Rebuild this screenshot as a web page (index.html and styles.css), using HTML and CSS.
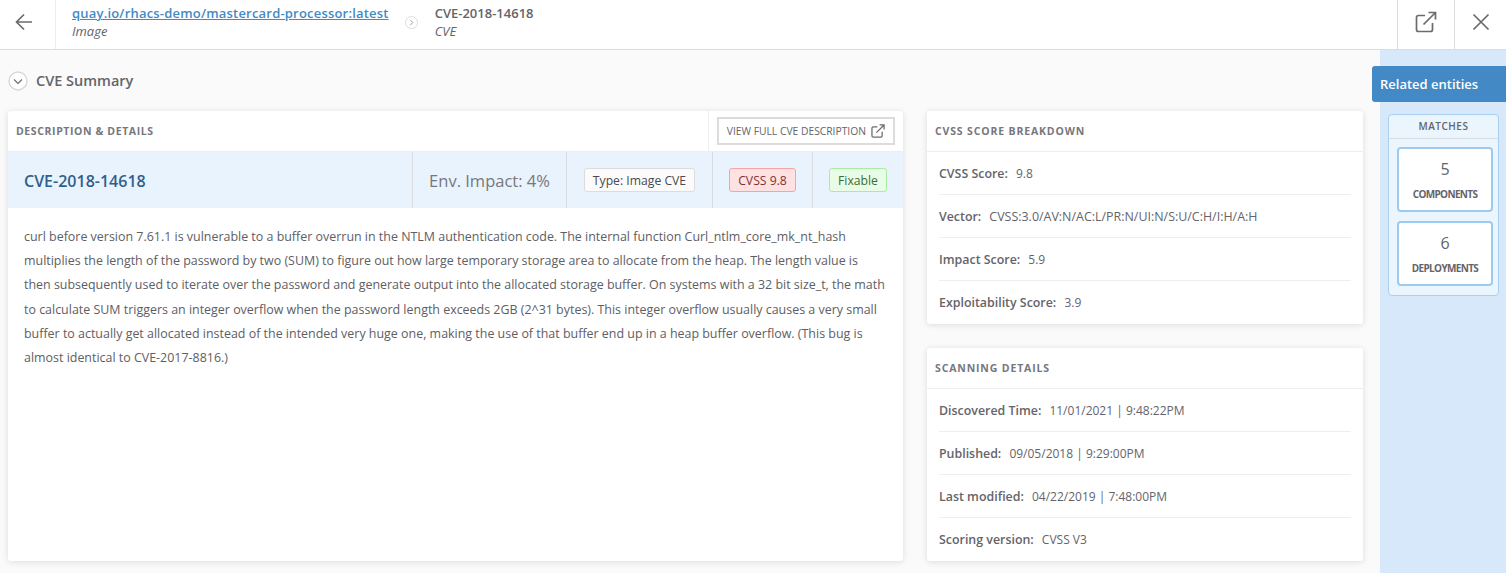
FILE: index.html
```html
<!DOCTYPE html>
<html lang="en">
<head>
    <meta charset="UTF-8">
    <meta name="viewport" content="width=device-width, initial-scale=1.0">
    <title>CVE-2018-14618</title>
    <link rel="stylesheet" href="styles.css">
</head>
<body>
    <header class="topbar">
        <button class="back-btn" aria-label="Back">
            <svg width="20" height="20" viewBox="0 0 20 20" fill="none" stroke="#6b6b6b" stroke-width="1.7"><path d="M18 10H2.500M10 2.500 2.500 10l7.500 7.500"/></svg>
        </button>
        <div class="crumbs">
            <div class="crumb">
                <a href="#" class="crumb-link">quay.io/rhacs-demo/mastercard-processor:latest</a>
                <em class="crumb-type">Image</em>
            </div>
            <span class="crumb-sep">
                <svg width="13" height="13" viewBox="0 0 13 13" fill="none"><circle cx="6.500" cy="6.500" r="6" stroke="#dcdcdc"/><path d="M5.200 3.800 7.800 6.500 5.200 9.200" stroke="#9a9a9a" stroke-width=".9"/></svg>
            </span>
            <div class="crumb">
                <span class="crumb-title">CVE-2018-14618</span>
                <em class="crumb-type">CVE</em>
            </div>
        </div>
        <button class="top-icon" aria-label="Open in new window">
            <svg width="22" height="22" viewBox="0 0 22 22" fill="none" stroke="#6b6b6b" stroke-width="1.7"><path d="M10 4.500H3.500a2 2 0 0 0-2 2V18.500a2 2 0 0 0 2 2h12a2 2 0 0 0 2-2V12M8.500 13.500 20.500 1.500M13.500 1.500h7v7"/></svg>
        </button>
        <button class="top-icon" aria-label="Close">
            <svg width="18" height="18" viewBox="0 0 18 18" fill="none" stroke="#6b6b6b" stroke-width="1.7"><path d="M1.500 1.500l15 15M16.500 1.500l-15 15"/></svg>
        </button>
    </header>

    <div class="page">
        <main class="content">
            <div class="summary-head">
                <svg width="20" height="20" viewBox="0 0 20 20" fill="none"><circle cx="10" cy="10" r="9" fill="#fff" stroke="#d8d8d8" stroke-width="1.400"/><path d="M6 8.500 10 12.500l4-4" stroke="#6b6b6b" stroke-width="1.100"/></svg>
                <h2>CVE Summary</h2>
            </div>
            <div class="columns">
                <section class="card details">
                    <div class="card-head">
                        <h3>Description &amp; Details</h3>
                        <div class="head-action">
                            <a href="#" class="full-link">View Full CVE Description
                                <svg width="14" height="14" viewBox="0 0 22 22" fill="none" stroke="#6b6b6b" stroke-width="2"><path d="M10 4.500H3.500a2 2 0 0 0-2 2V18.500a2 2 0 0 0 2 2h12a2 2 0 0 0 2-2V12M8.500 13.500 20.500 1.500M13.500 1.500h7v7"/></svg>
                            </a>
                        </div>
                    </div>
                    <div class="cve-band">
                        <div class="band-name">CVE-2018-14618</div>
                        <div class="band-cell band-impact">Env. Impact: 4%</div>
                        <div class="band-cell band-type"><span class="tag tag-plain">Type: Image CVE</span></div>
                        <div class="band-cell band-cvss"><span class="tag tag-red">CVSS 9.8</span></div>
                        <div class="band-cell band-fix"><span class="tag tag-green">Fixable</span></div>
                    </div>
                    <p class="description">curl before version 7.61.1 is vulnerable to a buffer overrun in the NTLM authentication code. The internal function Curl_ntlm_core_mk_nt_hash multiplies the length of the password by two (SUM) to figure out how large temporary storage area to allocate from the heap. The length value is then subsequently used to iterate over the password and generate output into the allocated storage buffer. On systems with a 32 bit size_t, the math to calculate SUM triggers an integer overflow when the password length exceeds 2GB (2^31 bytes). This integer overflow usually causes a very small buffer to actually get allocated instead of the intended very huge one, making the use of that buffer end up in a heap buffer overflow. (This bug is almost identical to CVE-2017-8816.)</p>
                </section>

                <div class="side-cards">
                    <section class="card info">
                        <div class="card-head"><h3>CVSS Score Breakdown</h3></div>
                        <ul class="rows">
                            <li><b>CVSS Score:</b> 9.8</li>
                            <li><b>Vector:</b> <span class="vector">CVSS:3.0/AV:N/AC:L/PR:N/UI:N/S:U/C:H/I:H/A:H</span></li>
                            <li><b>Impact Score:</b> 5.9</li>
                            <li><b>Exploitability Score:</b> 3.9</li>
                        </ul>
                    </section>
                    <section class="card info">
                        <div class="card-head"><h3>Scanning Details</h3></div>
                        <ul class="rows">
                            <li><b>Discovered Time:</b> 11/01/2021 | 9:48:22PM</li>
                            <li><b>Published:</b> 09/05/2018 | 9:29:00PM</li>
                            <li><b>Last modified:</b> 04/22/2019 | 7:48:00PM</li>
                            <li><b>Scoring version:</b> CVSS V3</li>
                        </ul>
                    </section>
                </div>
            </div>
        </main>

        <aside class="related">
            <div class="related-tab">Related entities</div>
            <div class="matches">
                <div class="matches-title">Matches</div>
                <div class="matches-list">
                    <a href="#" class="match"><span class="match-num">5</span><span class="match-label">Components</span></a>
                    <a href="#" class="match"><span class="match-num">6</span><span class="match-label">Deployments</span></a>
                </div>
            </div>
        </aside>
    </div>
</body>
</html>
```

FILE: styles.css
```css
* {
    box-sizing: border-box;
}

html, body {
    height: 100%;
}

body {
    font-family: "Open Sans", sans-serif;
    font-size: 12px;
    margin: 0;
    color: #64646a;
    background-color: #fafafa;
    overflow: hidden;
}

button {
    background: none;
    border: 0;
    padding: 0;
}

/* top bar */
.topbar {
    display: flex;
    height: 50px;
    background-color: #fff;
    border-bottom: 1px solid #dcdcdc;
}

.back-btn {
    width: 56px;
    border-right: 1px solid #eee;
    display: flex;
    align-items: center;
    justify-content: center;
    padding: 0 8px 5px 0;
}

.crumbs {
    flex: 1;
    display: flex;
    align-items: center;
    padding-left: 16px;
}

.crumb {
    display: flex;
    flex-direction: column;
    line-height: 18px;
    margin-top: -5px;
}

.crumb-link {
    color: #3f8ac8;
    font-size: 13px;
    font-weight: 600;
    letter-spacing: 0.2px;
}

.crumb-title {
    font-size: 13px;
    font-weight: 600;
    color: #64646a;
}

.crumb-type {
    color: #64646a;
    font-size: 13px;
}

.crumb-sep {
    display: flex;
    margin: 0 17px 5px 16px;
}

.top-icon {
    width: 57px;
    border-left: 1px solid #dcdcdc;
    display: flex;
    align-items: center;
    justify-content: center;
    padding-bottom: 5px;
}

.top-icon + .top-icon {
    width: 52px;
}

/* main layout */
.page {
    display: flex;
    height: 523px;
}

.content {
    flex: 1;
    padding: 0 17px 0 8px;
}

.summary-head {
    display: flex;
    align-items: center;
    gap: 8px;
    height: 61px;
}

.summary-head h2 {
    margin: 0;
    font-size: 14.500px;
    font-weight: 600;
    color: #64646a;
}

.columns {
    display: flex;
    gap: 24px;
}

.card {
    background-color: #fff;
    border-radius: 3px;
    box-shadow: 0 1px 6px rgba(0, 0, 0, 0.12);
}

.details {
    width: 895px;
    height: 450px;
}

.side-cards {
    width: 436px;
    display: flex;
    flex-direction: column;
    gap: 24px;
}

.info {
    height: 213px;
}

.card-head {
    display: flex;
    align-items: center;
    height: 41px;
    border-bottom: 1px solid #eee;
    padding-left: 8px;
}

.card-head h3 {
    flex: 1;
    margin: 0;
    font-size: 10.500px;
    font-weight: 700;
    letter-spacing: 0.6px;
    text-transform: uppercase;
    color: #77777c;
}

.info .card-head h3 {
    letter-spacing: 0.85px;
}

.head-action {
    height: 100%;
    border-left: 1px solid #eee;
    padding: 0 8px 0 8px;
    display: flex;
    align-items: center;
}

.full-link {
    display: flex;
    align-items: center;
    gap: 5px;
    height: 28px;
    padding: 0 8px;
    border: 2px solid #dcdcdc;
    font-size: 10.300px;
    text-transform: uppercase;
    color: #64646a;
    text-decoration: none;
}

/* cve band */
.cve-band {
    display: flex;
    height: 56px;
    background-color: #e8f3fd;
}

.band-name {
    flex: 1;
    align-self: center;
    padding: 1px 0 0 16px;
    font-size: 16px;
    font-weight: 600;
    color: #315f8c;
}

.band-cell {
    display: flex;
    align-items: center;
    justify-content: center;
    border-left: 1px solid #d9dde1;
}

.band-impact {
    width: 154px;
    font-size: 16.500px;
    color: #77777c;
}

.band-type {
    width: 146px;
}

.band-cvss {
    width: 100px;
}

.band-fix {
    width: 91px;
}

.tag {
    display: block;
    height: 24px;
    line-height: 23px;
    padding: 0 8px;
    border: 1px solid;
    border-radius: 3px;
    font-size: 12.200px;
    font-weight: 500;
}

.tag-plain {
    background-color: #fbfbfb;
    border-color: #dcdcdc;
    color: #4a4a4f;
}

.tag-red {
    background-color: #ffe1e1;
    border-color: #f3a5a5;
    color: #7c3434;
}

.tag-green {
    background-color: #e9fde6;
    border-color: #a9eca0;
    color: #3d6b37;
}

.description {
    margin: 0;
    padding: 17px 16px;
    font-size: 12.440px;
    line-height: 24.200px;
    color: #5e5e63;
}

/* key value rows */
.rows {
    list-style: none;
    margin: 0;
    padding: 0 12px;
}

.rows li {
    height: 43px;
    line-height: 44px;
    border-bottom: 1px solid #eee;
    font-size: 12px;
    color: #64646a;
}

.rows li:last-child {
    border-bottom: 0;
}

.rows b {
    font-size: 12.400px;
    font-weight: 600;
    margin-right: 5px;
}

.vector {
    font-size: 12.450px;
}

/* right panel */
.related {
    position: relative;
    width: 126px;
    background-color: #d6e8fa;
    padding: 64px 7px 0 8px;
}

.related-tab {
    position: absolute;
    top: 16px;
    left: -8px;
    right: 0;
    height: 36px;
    line-height: 36px;
    padding-left: 8px;
    background-color: #4389c5;
    border-radius: 3px 0 0 3px;
    color: #fff;
    font-size: 13px;
    font-weight: 600;
}

.matches {
    height: 182px;
    background-color: #ebf5fe;
    border: 1px solid #a8d0f0;
    border-radius: 4px;
}

.matches-title {
    height: 24px;
    line-height: 23px;
    border-bottom: 1px solid #d9dde1;
    text-align: center;
    font-size: 10px;
    font-weight: 600;
    letter-spacing: 0.5px;
    text-transform: uppercase;
}

.matches-list {
    display: flex;
    flex-direction: column;
    gap: 9px;
    padding: 8px 5px 8px 8px;
}

.match {
    display: flex;
    flex-direction: column;
    align-items: center;
    height: 65px;
    background-color: #fff;
    border: 2px solid #9ccbef;
    border-radius: 4px;
    color: #64646a;
    text-decoration: none;
}

.match-num {
    font-size: 16px;
    line-height: 22px;
    margin-top: 9px;
}

.match-label {
    font-size: 10px;
    font-weight: 700;
    line-height: 14px;
    margin-top: 7px;
    text-transform: uppercase;
    letter-spacing: -0.65px;
}
```
